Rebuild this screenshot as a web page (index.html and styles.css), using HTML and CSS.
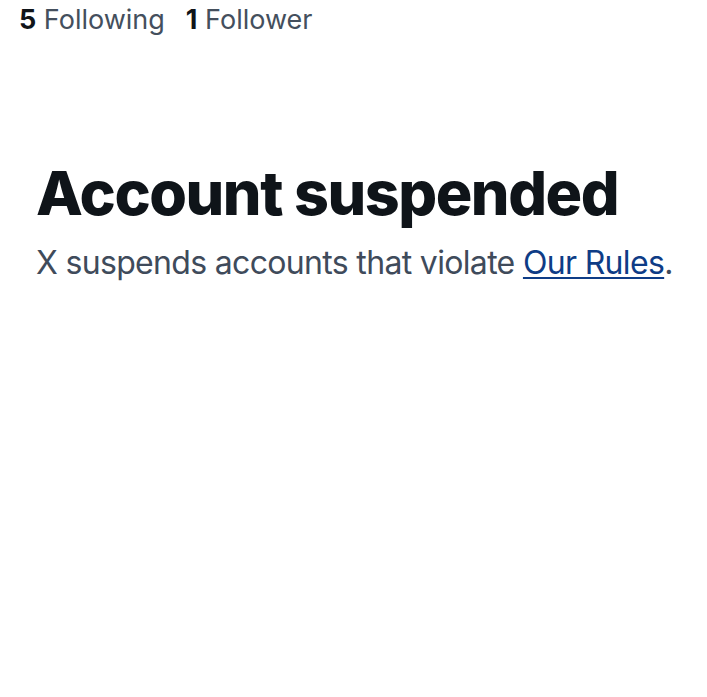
FILE: index.html
```html
<!DOCTYPE html>
<html>
<head>
<meta charset="utf-8">
<link rel="stylesheet" href="styles.css">
</head>
<body>
<div class="page">
  <div class="stats">
    <span class="stat"><b class="num">5</b> Following</span>
    <span class="stat"><b class="num">1</b> Follower</span>
  </div>
  <div class="notice">
    <h1 class="title">Account suspended</h1>
    <p class="desc">X suspends accounts that violate <a class="link" href="#">Our Rules</a>.</p>
  </div>
</div>
</body>
</html>
```
FILE: styles.css
```css
html, body {
  margin: 0;
  padding: 0;
  background: #fff;
}
body {
  font-family: Inter, "Noto Sans", sans-serif;
  width: 707px;
  height: 697px;
  overflow: hidden;
}
.page {
  display: flex;
  flex-direction: column;
}
.stats {
  display: flex;
  gap: 21px;
  padding: 3px 0 0 19px;
  font-size: 27px;
  line-height: 34px;
  color: #444f5d;
}
.num {
  color: #0f1419;
  font-weight: 700;
}
.notice {
  padding: 120px 0 0 36px;
}
.title {
  margin: 0;
  font-size: 61px;
  line-height: 72px;
  font-weight: 800;
  color: #0f1419;
  letter-spacing: -1.45px;
}
.desc {
  margin: 14px 0 0;
  font-size: 32px;
  line-height: 40px;
  color: #3f4b5b;
  letter-spacing: -0.67px;
}
.link {
  color: #0e3c86;
  text-decoration: underline;
  text-underline-offset: 3px;
  text-decoration-thickness: 2px;
}
```
